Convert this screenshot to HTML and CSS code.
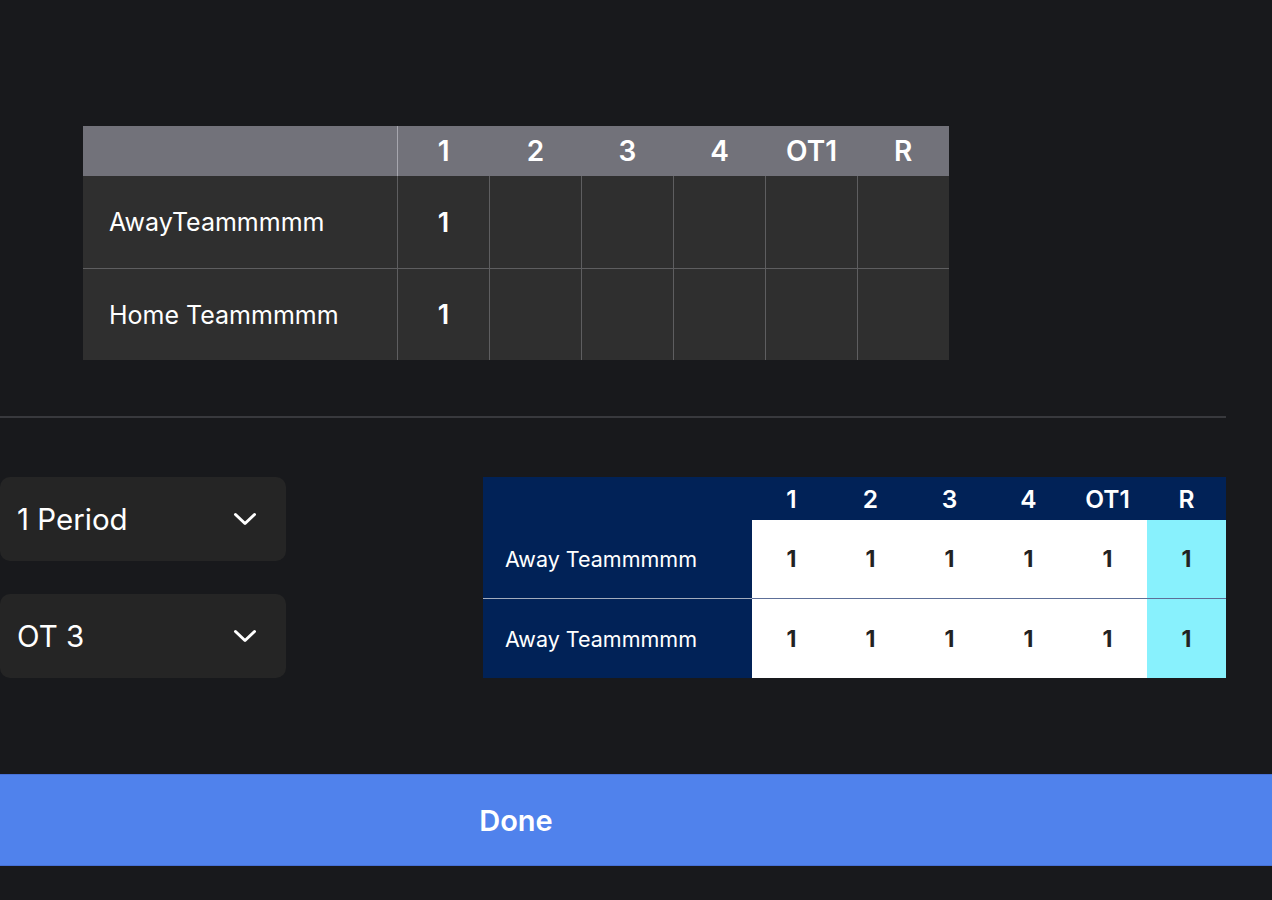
FILE: index.html
```html
<!DOCTYPE html>
<html>
<head>
<meta charset="utf-8">
<link rel="stylesheet" href="styles.css">
</head>
<body>
<div class="page">
  <section class="top">
    <table class="score">
      <thead>
        <tr>
          <th class="name"></th>
          <th class="first">1</th>
          <th>2</th>
          <th>3</th>
          <th>4</th>
          <th>OT1</th>
          <th>R</th>
        </tr>
      </thead>
      <tbody>
        <tr>
          <td class="name">AwayTeammmmm</td>
          <td>1</td><td></td><td></td><td></td><td></td><td></td>
        </tr>
        <tr class="r2">
          <td class="name">Home Teammmmm</td>
          <td>1</td><td></td><td></td><td></td><td></td><td></td>
        </tr>
      </tbody>
    </table>
  </section>

  <hr class="divider">

  <section class="lower">
    <div class="selects">
      <div class="select">
        <span>1 Period</span>
        <svg class="chev" width="24" height="14" viewBox="0 0 24 14"><path d="M2.5 2.5 L12 11.5 L21.5 2.5" fill="none" stroke="#fff" stroke-width="3" stroke-linecap="round" stroke-linejoin="round"/></svg>
      </div>
      <div class="select">
        <span>OT 3</span>
        <svg class="chev" width="24" height="14" viewBox="0 0 24 14"><path d="M2.5 2.5 L12 11.5 L21.5 2.5" fill="none" stroke="#fff" stroke-width="3" stroke-linecap="round" stroke-linejoin="round"/></svg>
      </div>
    </div>

    <table class="preview">
      <thead>
        <tr>
          <th class="name"></th>
          <th>1</th><th>2</th><th>3</th><th>4</th><th>OT1</th><th>R</th>
        </tr>
      </thead>
      <tbody>
        <tr class="r1">
          <td class="name">Away Teammmmm</td>
          <td>1</td><td>1</td><td>1</td><td>1</td><td>1</td><td class="total">1</td>
        </tr>
        <tr>
          <td class="name">Away Teammmmm</td>
          <td>1</td><td>1</td><td>1</td><td>1</td><td>1</td><td class="total">1</td>
        </tr>
      </tbody>
    </table>
  </section>
</div>
<button class="done">Done</button>
</body>
</html>
```

FILE: styles.css
```css
html, body {
  margin: 0;
  padding: 0;
  background: #18191c;
  font-family: Inter, "Noto Sans", sans-serif;
  color: #fff;
  height: 900px;
  overflow: hidden;
}

.page {
  width: 1226px;
}

.top {
  padding: 126px 0 0 83px;
}

.score {
  border-collapse: collapse;
  table-layout: fixed;
}

.score th,
.score td {
  padding: 0;
  width: 91px;
  text-align: center;
}

.score th {
  background: #72727a;
  height: 50px;
  font-size: 28px;
  font-weight: 600;
}

.score td {
  background: #2f2f2f;
  height: 92px;
  font-size: 27px;
  font-weight: 600;
  border-left: 1px solid #5e5e60;
}

.score tr.r2 td {
  height: 91px;
  border-top: 1px solid #5e5e60;
}

.score th.first {
  border-left: 1px solid #a6a6ae;
}

.score .name {
  width: 314px;
  text-align: left;
}

.score td.name {
  padding-left: 26px;
  width: 288px;
  font-size: 25px;
  font-weight: 400;
  border-left: none;
}

.divider {
  margin: 56px 0 0 0;
  border: none;
  height: 2px;
  background: #38393d;
}

.lower {
  display: flex;
  justify-content: space-between;
  align-items: flex-start;
  margin-top: 59px;
}

.selects {
  display: flex;
  flex-direction: column;
  gap: 33px;
  width: 286px;
}

.select {
  height: 84px;
  background: #252525;
  border-radius: 10px;
  display: flex;
  align-items: center;
  justify-content: space-between;
  padding: 0 29px 0 17px;
  font-size: 29.5px;
}

.chev {
  display: block;
}

.preview {
  border-collapse: collapse;
  table-layout: fixed;
}

.preview th,
.preview td {
  padding: 0;
  width: 79px;
  text-align: center;
}

.preview th {
  background: #012257;
  height: 43px;
  font-size: 24.5px;
  font-weight: 600;
}

.preview td {
  background: #fff;
  color: #222;
  height: 79px;
  font-size: 23px;
  font-weight: 700;
}

.preview tr.r1 td {
  height: 78px;
  border-bottom: 1px solid #5d6f98;
}

.preview tr.r1 td.name {
  border-bottom-color: #a3acbd;
}

.preview .name {
  width: 269px;
  text-align: left;
}

.preview td.name {
  background: #012257;
  color: #fff;
  font-size: 21.5px;
  font-weight: 400;
  padding-left: 22px;
  width: 247px;
}

.preview td.total {
  background: #88f1fd;
}

.done {
  display: block;
  margin-top: 96px;
  width: 1272px;
  height: 92px;
  border: none;
  border-top: 1px solid #4670d6;
  border-bottom: 1px solid #4670d6;
  background: #5082ec;
  color: #fff;
  font-family: Inter, "Noto Sans", sans-serif;
  font-size: 29px;
  font-weight: 600;
  padding: 0 240px 0 0;
}
```
